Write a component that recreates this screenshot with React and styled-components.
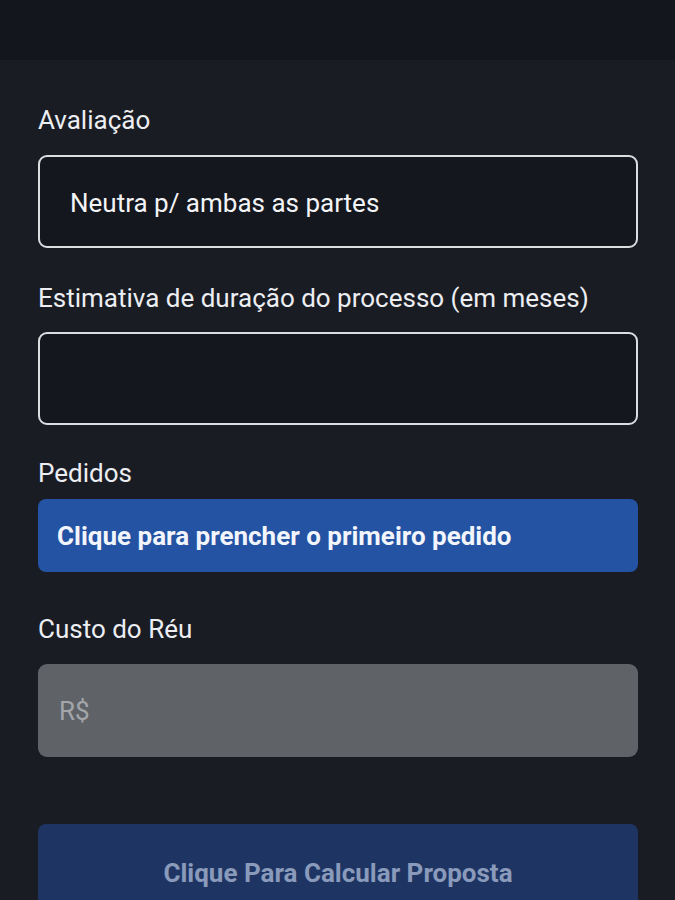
import React from 'react';
import styled, { createGlobalStyle } from 'styled-components';

const GlobalStyle = createGlobalStyle`
  html, body {
    margin: 0;
    padding: 0;
    background-color: #1a1c24;
  }
  body {
    font-family: Roboto, "Liberation Sans", Arial, sans-serif;
    -webkit-font-smoothing: antialiased;
  }
`;

const Screen = styled.div`
  display: flex;
  flex-direction: column;
  width: 675px;
  height: 900px;
  overflow: hidden;
  background-color: #1a1c24;
`;

const TopBar = styled.header`
  flex-shrink: 0;
  height: 60px;
  background-color: #14161d;
`;

const Form = styled.main`
  display: flex;
  flex-direction: column;
  padding: 46px 37px 0 38px;
`;

const Label = styled.label`
  display: block;
  height: 28px;
  line-height: 28px;
  font-size: 26px;
  color: #eceef2;
  margin-top: ${({ top }) => top || 0}px;
  margin-bottom: ${({ gap }) => gap}px;
`;

const TextBox = styled.div`
  display: flex;
  align-items: center;
  box-sizing: border-box;
  height: 93px;
  padding: 3px 30px 0;
  border: 2px solid #dcdde0;
  border-radius: 9px;
  background-color: #15171e;
  font-size: 26px;
  color: #f3f4f6;
`;

const BlueBar = styled.button`
  display: flex;
  align-items: center;
  box-sizing: border-box;
  width: 100%;
  height: 73px;
  padding: 0 19px;
  border: none;
  border-radius: 8px;
  background-color: #2353a2;
  font-family: inherit;
  font-size: 26px;
  font-weight: 700;
  color: #f2f5fb;
  text-align: left;
`;

const MoneyBox = styled.div`
  display: flex;
  align-items: center;
  box-sizing: border-box;
  height: 93px;
  padding: 0 21px;
  border-radius: 9px;
  background-color: #5f6267;
  font-size: 26px;
  color: #a3a6ab;
`;

const SubmitButton = styled.button`
  display: flex;
  align-items: center;
  justify-content: center;
  box-sizing: border-box;
  width: 100%;
  height: 98px;
  margin-top: 67px;
  border: none;
  border-radius: 8px;
  background-color: #1e3564;
  font-family: inherit;
  font-size: 26px;
  font-weight: 700;
  color: #8a9aba;
`;

const App = () => (
  <Screen>
    <GlobalStyle />
    <TopBar />
    <Form>
      <Label gap={21}>Avaliação</Label>
      <TextBox>Neutra p/ ambas as partes</TextBox>

      <Label top={36} gap={20}>Estimativa de duração do processo (em meses)</Label>
      <TextBox />

      <Label top={34} gap={12}>Pedidos</Label>
      <BlueBar type="button">Clique para prencher o primeiro pedido</BlueBar>

      <Label top={43} gap={21}>Custo do Réu</Label>
      <MoneyBox>R$</MoneyBox>

      <SubmitButton type="button">Clique Para Calcular Proposta</SubmitButton>
    </Form>
  </Screen>
);

export default App;
